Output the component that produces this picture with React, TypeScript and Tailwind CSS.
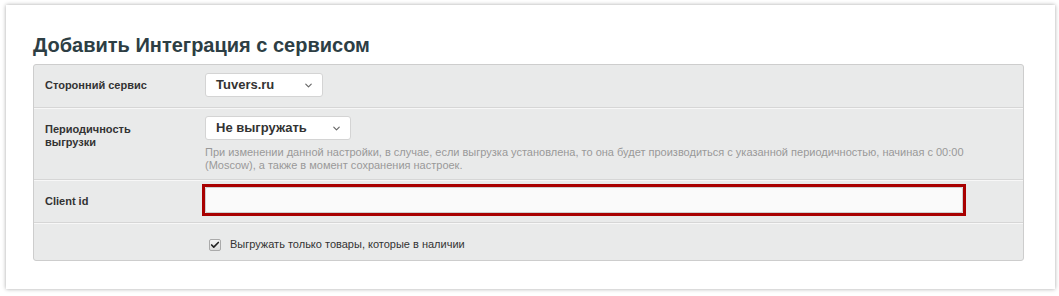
import { Check, ChevronDown } from "lucide-react";

const font = { fontFamily: '"Liberation Sans", Arial, sans-serif' };

function Select({ value, width }: { value: string; width: string }) {
  return (
    <div
      className={`${width} h-[24px] flex items-center justify-between pl-[10px] pr-[8px] bg-white border border-[#d4d4d4] rounded-[3px] text-[13px] font-bold text-[#333]`}
    >
      <span>{value}</span>
      <ChevronDown className="w-[11px] h-[11px] text-[#666]" strokeWidth={2.5} />
    </div>
  );
}

function Row({
  label,
  children,
  className,
  last,
}: {
  label?: React.ReactNode;
  children: React.ReactNode;
  className: string;
  last?: boolean;
}) {
  return (
    <div
      className={`flex ${className} ${last ? "" : "border-b border-[#d6d6d6] shadow-[0_1px_0_#f7f7f7]"}`}
    >
      <div className="w-[171px] pl-[11px] text-[11px] font-bold text-[#333] leading-[13px]">
        {label}
      </div>
      <div className="flex-1">{children}</div>
    </div>
  );
}

export default function App() {
  return (
    <div className="w-[1059px] h-[296px] bg-white pt-[5px] pl-[6px]" style={font}>
      <div className="w-[1049px] h-[284px] bg-white shadow-[0_0_4px_rgba(0,0,0,0.35)] pl-[27px] pt-[28px]">
        <h1 className="text-[20px] leading-[24px] font-bold text-[#2d3e44] mb-[7px]">
          Добавить Интеграция с сервисом
        </h1>
        <div className="w-[991px] bg-[#e9eaea] border border-[#cdcdcd] rounded-[3px]">
          <Row label={<div className="pt-[14px]">Сторонний сервис</div>} className="h-[43px]">
            <div className="pt-[8px]">
              <Select value="Tuvers.ru" width="w-[118px]" />
            </div>
          </Row>
          <Row
            label={<div className="pt-[15px]">Периодичность<br />выгрузки</div>}
            className="h-[72px]"
          >
            <div className="pt-[8px]">
              <Select value="Не выгружать" width="w-[146px]" />
              <p className="mt-[6px] w-[770px] text-[11px] leading-[13px] text-[#999]">
                При изменении данной настройки, в случае, если выгрузка установлена, то она будет производиться с указанной периодичностью, начиная с 00:00 (Moscow), а также в момент сохранения настроек.
              </p>
            </div>
          </Row>
          <Row label={<div className="pt-[15px]">Client id</div>} className="h-[43px]">
            <div className="pt-[4px] -ml-[3px]">
              <div className="w-[764px] h-[32px] border-[3px] border-[#a80000]">
                <div className="h-full bg-[#fafafa] border border-[#cfcfcf] rounded-[2px]" />
              </div>
            </div>
          </Row>
          <Row className="h-[37px]" last>
            <div className="flex items-center gap-[9px] pt-[15px] pl-[4px]">
              <div className="w-[12px] h-[12px] rounded-[2px] border border-[#aaa] bg-gradient-to-b from-[#f4f4f4] to-[#dcdcdc] flex items-center justify-center">
                <Check className="w-[10px] h-[10px] text-[#222]" strokeWidth={4} />
              </div>
              <span className="text-[11px] text-[#333] leading-[13px]">
                Выгружать только товары, которые в наличии
              </span>
            </div>
          </Row>
        </div>
      </div>
    </div>
  );
}
